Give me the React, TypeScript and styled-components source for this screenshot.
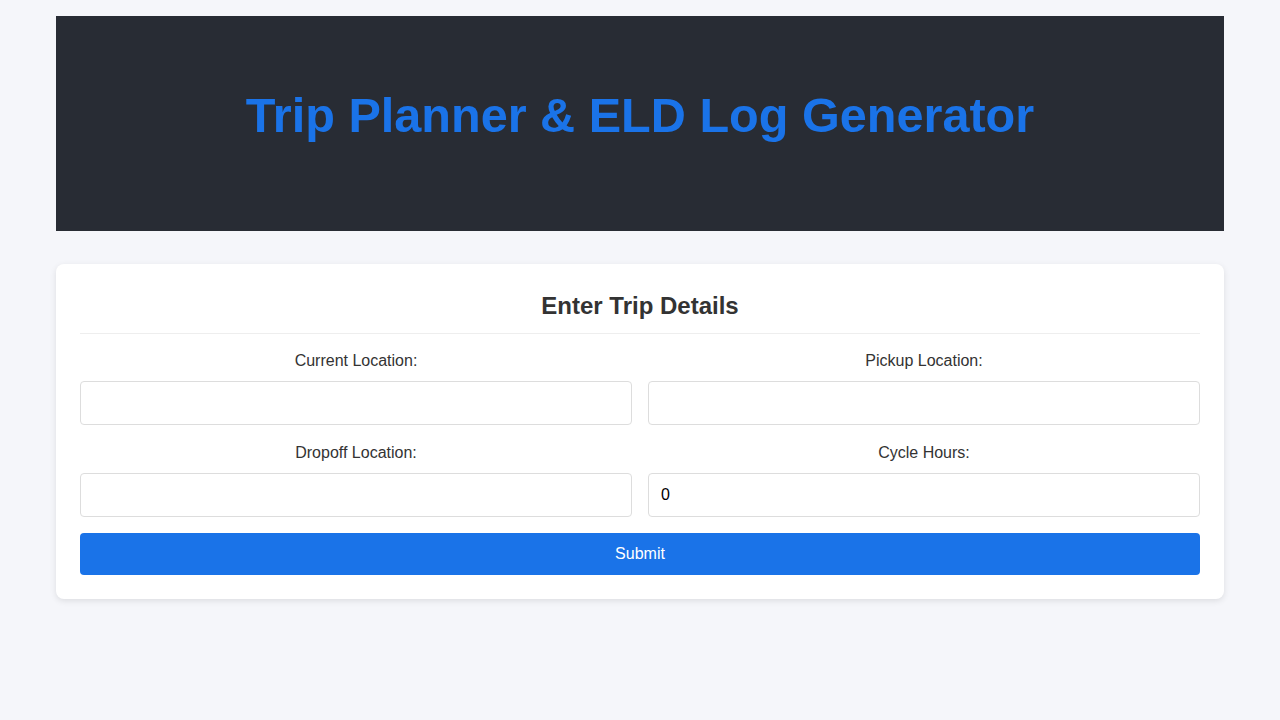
import React, { useState } from "react";
import styled, { createGlobalStyle } from "styled-components";

const GlobalStyle = createGlobalStyle`
  * { box-sizing: border-box; }
  html, body {
    margin: 0;
    padding: 0;
    background: #f5f6fa;
    font-family: "Liberation Sans", Arial, sans-serif;
    color: #333;
  }
`;

const Page = styled.div`
  max-width: 1200px;
  margin: 0 auto;
  padding: 16px;
  display: flex;
  flex-direction: column;
  gap: 33px;
`;

const Header = styled.header`
  background: #282c34;
  padding: 71px 16px 88px;
  text-align: center;
`;

const Title = styled.h1`
  margin: 0;
  font-size: 48.6px;
  font-weight: 700;
  color: #1a73e8;
`;

const Card = styled.section`
  background: #ffffff;
  border-radius: 8px;
  box-shadow: 0 2px 6px rgba(0, 0, 0, 0.1);
  padding: 28px 24px 24px;
`;

const CardTitle = styled.h2`
  margin: 0;
  padding-bottom: 13px;
  border-bottom: 1px solid #eeeeee;
  font-size: 24px;
  font-weight: 700;
  text-align: center;
  color: #333;
`;

const Form = styled.form`
  margin-top: 18px;
  display: grid;
  grid-template-columns: 1fr 1fr;
  column-gap: 16px;
  row-gap: 19px;
`;

const Field = styled.div`
  display: flex;
  flex-direction: column;
`;

const Label = styled.label`
  display: block;
  text-align: center;
  font-size: 16px;
  color: #333;
  margin-bottom: 11px;
`;

const Input = styled.input`
  height: 44px;
  padding: 12px;
  border: 1px solid #dddddd;
  border-radius: 4px;
  font-family: "Liberation Sans", Arial, sans-serif;
  font-size: 16px;
  color: #000;
  background: #fff;
  outline: none;
`;

const SubmitButton = styled.button`
  grid-column: 1 / -1;
  margin-top: -3px;
  height: 42px;
  border: none;
  border-radius: 4px;
  background: #1a73e8;
  color: #ffffff;
  font-family: "Liberation Sans", Arial, sans-serif;
  font-size: 16px;
  cursor: pointer;
`;

export default function App() {
  const [current, setCurrent] = useState("");
  const [pickup, setPickup] = useState("");
  const [dropoff, setDropoff] = useState("");
  const [cycle, setCycle] = useState("0");

  return (
    <>
      <GlobalStyle />
      <Page>
        <Header>
          <Title>Trip Planner &amp; ELD Log Generator</Title>
        </Header>
        <Card>
          <CardTitle>Enter Trip Details</CardTitle>
          <Form onSubmit={(e) => e.preventDefault()}>
            <Field>
              <Label htmlFor="current">Current Location:</Label>
              <Input id="current" value={current} onChange={(e) => setCurrent(e.target.value)} />
            </Field>
            <Field>
              <Label htmlFor="pickup">Pickup Location:</Label>
              <Input id="pickup" value={pickup} onChange={(e) => setPickup(e.target.value)} />
            </Field>
            <Field>
              <Label htmlFor="dropoff">Dropoff Location:</Label>
              <Input id="dropoff" value={dropoff} onChange={(e) => setDropoff(e.target.value)} />
            </Field>
            <Field>
              <Label htmlFor="cycle">Cycle Hours:</Label>
              <Input id="cycle" type="number" value={cycle} onChange={(e) => setCycle(e.target.value)} />
            </Field>
            <SubmitButton type="submit">Submit</SubmitButton>
          </Form>
        </Card>
      </Page>
    </>
  );
}
